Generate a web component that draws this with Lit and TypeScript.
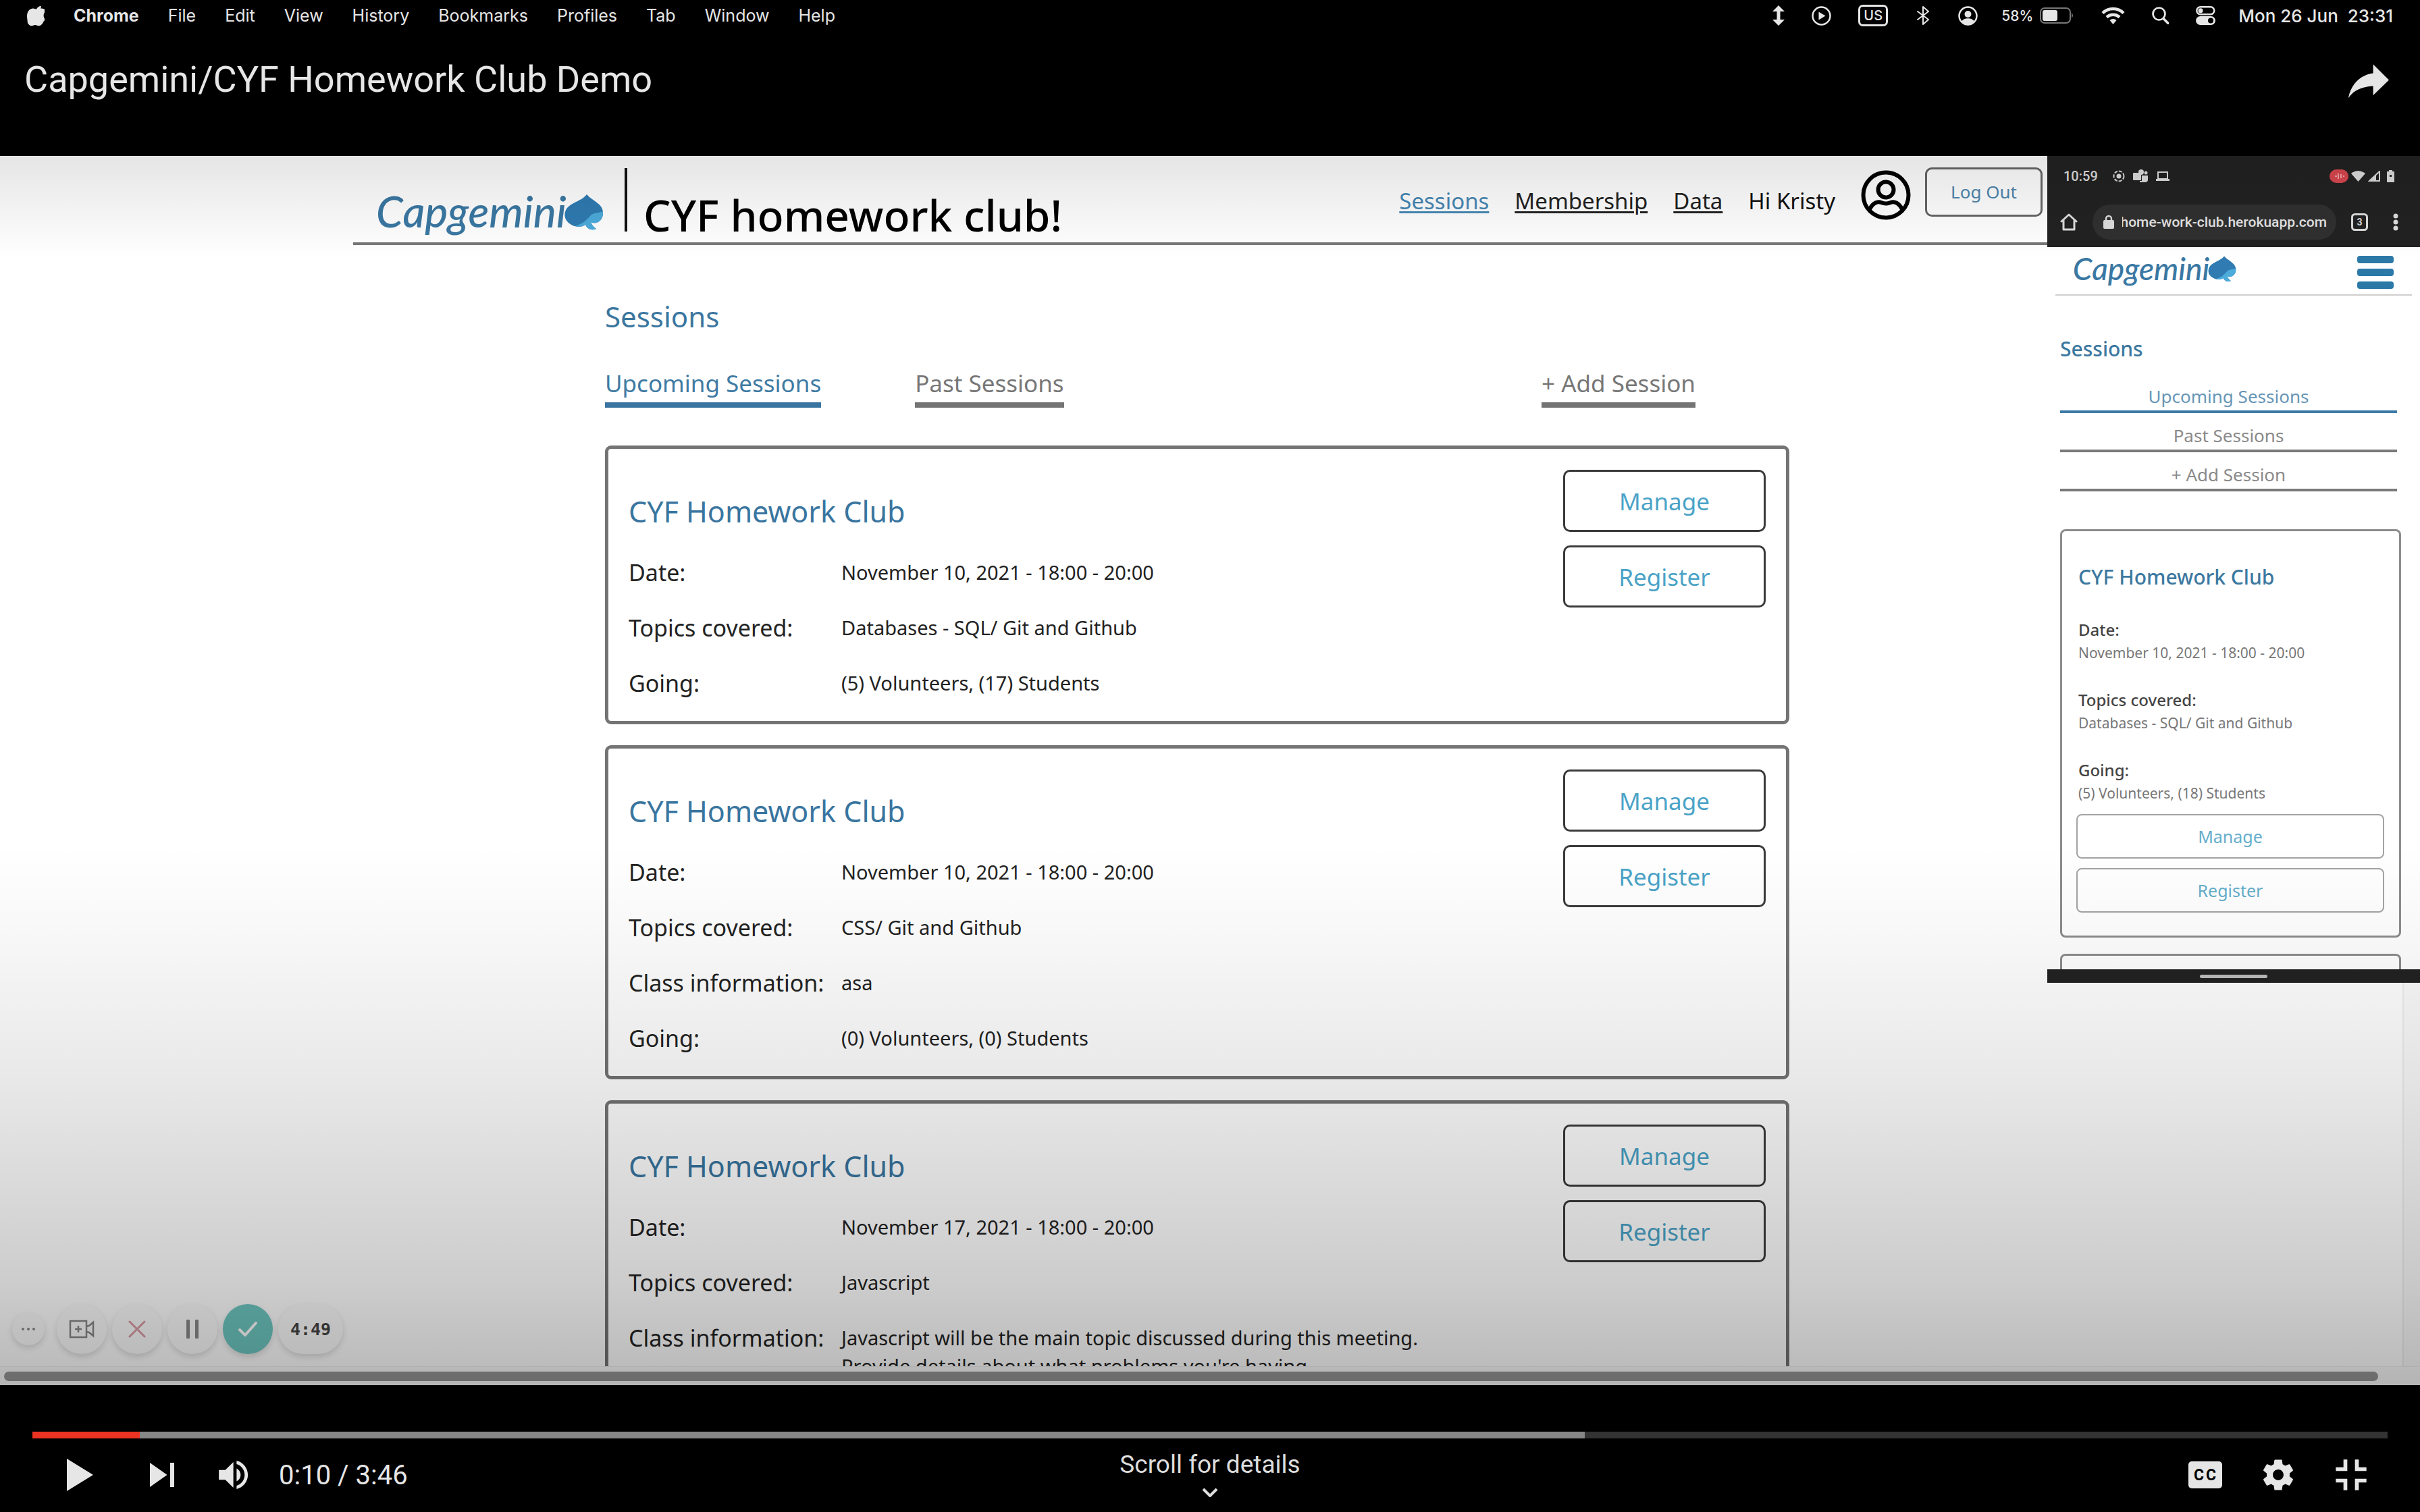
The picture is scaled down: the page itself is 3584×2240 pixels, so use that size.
import { LitElement, html, css, svg, nothing } from "lit";
import { customElement, property } from "lit/decorators.js";

interface Session {
  date: string;
  topics: string;
  info?: string;
  going?: string;
}

const sessions: Session[] = [
  { date: "November 10, 2021 - 18:00 - 20:00", topics: "Databases - SQL/ Git and Github", going: "(5) Volunteers, (17) Students" },
  { date: "November 10, 2021 - 18:00 - 20:00", topics: "CSS/ Git and Github", info: "asa", going: "(0) Volunteers, (0) Students" },
  {
    date: "November 17, 2021 - 18:00 - 20:00",
    topics: "Javascript",
    info: "Javascript will be the main topic discussed during this meeting. Provide details about what problems you're having",
  },
];

const icon = (w: number, h: number, box: string, body: unknown) =>
  html`<svg width=${w} height=${h} viewBox=${box} fill="currentColor" aria-hidden="true">${body}</svg>`;

const stroke = (d: string, width: number) =>
  svg`<path d=${d} fill="none" stroke="currentColor" stroke-width=${width} stroke-linecap="round" stroke-linejoin="round"/>`;

/** Wordmark followed by the two-tone spade. */
@customElement("brand-logo")
export class BrandLogo extends LitElement {
  @property({ type: Number }) width = 334;

  static styles = css`
    :host { display: block; line-height: 0; }
    .logo { overflow: visible; }
    .word { font: italic 500 64px "Lato", "Liberation Sans", sans-serif; fill: #3a78a3; }
  `;

  render() {
    return html`<svg class="logo" width=${this.width} viewBox="0 0 334 78" role="img" aria-label="Capgemini">
      <text class="word" x="-3" y="54">Capgemini</text>
      <path fill="#2f7bb2" d="M309 5C313 10 319 13 325 18C332 23 335 31 332 39C329 46 322 49 315 46C317 51 320 54 323 56C315 59 310 56 307 50C298 56 286 52 280 45C274 38 276 28 282 23C290 16 302 14 309 5Z"/>
      <path fill="#4cabdb" d="M333 30C334 43 324 51 315 46C317 51 320 54 323 56C315 59 310 56 307 50C302 53 297 54 292 52C304 48 309 43 314 37C319 31 327 33 333 30Z"/>
    </svg>`;
  }
}

@customElement("session-card")
export class SessionCard extends LitElement {
  @property({ attribute: false }) session!: Session;

  static styles = css`
    :host { display: block; font-family: "Noto Sans", "Open Sans", sans-serif; color: #222; }
    .card {
      display: flex; justify-content: space-between; align-items: flex-start;
      border: 5px solid #747474; border-radius: 9px; padding: 31px 30px 15px;
    }
    .title { margin: 32px 0 19px; font-size: 43px; line-height: 60px; font-weight: 400; color: #39759f; }
    .details { margin: 0; }
    .row { display: grid; grid-template-columns: 315px minmax(0, 880px); padding: 20px 0; }
    .label { font-size: 34px; line-height: 42px; }
    .value { margin: 0; font-size: 29px; line-height: 42px; }
    .actions { display: grid; gap: 20px; width: 300px; flex: none; }
    .action {
      box-sizing: border-box; height: 92px; border: 3px solid #3a3a3a; border-radius: 10px;
      background: none; font: 400 35px "Noto Sans", sans-serif; color: #4ba3c7;
    }
  `;

  private row(label: string, value?: string) {
    return value ? html`<div class="row"><dt class="label">${label}</dt><dd class="value">${value}</dd></div>` : nothing;
  }

  render() {
    const s = this.session;
    return html`<article class="card">
      <div>
        <h3 class="title">CYF Homework Club</h3>
        <dl class="details">
          ${this.row("Date:", s.date)} ${this.row("Topics covered:", s.topics)}
          ${this.row("Class information:", s.info)} ${this.row("Going:", s.going)}
        </dl>
      </div>
      <div class="actions">
        <button class="action">Manage</button>
        <button class="action">Register</button>
      </div>
    </article>`;
  }
}

@customElement("phone-view")
export class PhoneView extends LitElement {
  static styles = css`
    :host { display: block; font-family: "Noto Sans", "Open Sans", sans-serif; background: #fff; }
    .chrome { background: #222; color: #ddd; height: 135px; box-sizing: border-box; padding: 18px 31px 0 19px; }
    .status { display: flex; align-items: center; gap: 12px; height: 24px; padding-left: 5px; }
    .clock { font: 500 20px "Roboto", sans-serif; margin-right: 10px; }
    .radios { display: flex; align-items: center; gap: 4px; margin-left: auto; padding-right: 4px; }
    .bar { display: flex; align-items: center; height: 52px; margin-top: 30px; }
    .address {
      display: flex; align-items: center; gap: 12px; height: 52px; box-sizing: border-box; border-radius: 26px;
      background: #303030; margin: 0 22px 0 22px; padding: 0 14px 0 16px; flex: 1; min-width: 0;
    }
    .url { display: flex; justify-content: flex-end; overflow: hidden; flex: 1; min-width: 0; font: 500 21px/30px "Roboto", sans-serif; color: #e4e4e4; white-space: nowrap; }
    .tabs-icon { margin-right: 36px; }
    .tool { border: 0; background: none; color: inherit; padding: 0; display: flex; }
    .screen { height: 1070px; overflow: hidden; }
    .top { display: flex; justify-content: space-between; align-items: center; height: 72px; margin: 0 12px; padding: 6px 27px 0 28px; box-sizing: border-box; border-bottom: 2px solid #cfcfcf; color: #2c79a8; }
    .content { padding: 58px 28px 0 19px; }
    .heading { margin: 0; font-size: 30px; line-height: 42px; font-weight: 500; color: #3c78a0; }
    .tabs { display: grid; gap: 15px; padding: 31px 6px 0 0; }
    .tab { text-align: center; font-size: 26px; line-height: 36px; padding-bottom: 3px; text-decoration: none; color: #8a8a8a; border-bottom: 4px solid #7a7a7a; }
    .tab.on { color: #6796b6; border-color: #3d7ba7; }
    .card { border: 3px solid #8c8c8c; border-radius: 8px; padding: 47px 22px 34px 24px; margin-top: 56px; }
    .next { margin-top: 24px; padding-top: 0; min-height: 60px; }
    .title { margin: 0 0 40px; font-size: 30px; line-height: 42px; font-weight: 500; color: #3c78a0; }
    .details { margin: 0; }
    .label { font-size: 24px; line-height: 34px; font-weight: 500; color: #444; }
    .value { margin: 0 0 36px; font-size: 21px; line-height: 34px; color: #777; }
    .value:last-child { margin-bottom: 14px; }
    .actions { display: grid; gap: 14px; margin: 0 0 0 -3px; }
    .action { height: 66px; border: 2px solid #a3a3a3; border-radius: 8px; background: none; font: 400 25px "Noto Sans", sans-serif; color: #65aecb; }
    .home { background: #222; height: 20px; display: grid; place-items: center; }
    .handle { width: 100px; height: 5px; border-radius: 3px; background: #bdbdbd; }
  `;

  render() {
    return html`
      <div class="chrome">
        <div class="status">
          <span class="clock">10:59</span>
          ${icon(18, 18, "0 0 18 18", svg`<circle cx="9" cy="9" r="7.5" fill="none" stroke="currentColor" stroke-width="2" stroke-dasharray="5 2"/><circle cx="9" cy="9" r="3.5"/>`)}
          ${icon(22, 20, "0 0 22 20", svg`<rect x="0" y="5" width="12" height="11" rx="1"/><circle cx="12" cy="4" r="4"/><circle cx="19" cy="5" r="2.5"/><path d="M13 9h9v6a4 4 0 0 1-4 4h-8v-2h3z"/>`)}
          ${icon(20, 16, "0 0 20 16", svg`<path fill-rule="evenodd" d="M2 1h16v11h2v3H0v-3h2zM4 3v8h12V3z"/>`)}
          <span class="radios">
            ${icon(28, 20, "0 0 28 20", svg`<rect width="28" height="20" rx="10" fill="#d9474f"/><path d="M8 10h3M13 6v8M17 7v6M20 10h2" stroke="#f4a3a7" stroke-width="2"/>`)}
            ${icon(21, 16, "0 0 21 16", svg`<path d="M0 4Q10 -4 21 4L10.500 16z"/>`)}
            ${icon(18, 16, "0 0 18 16", svg`<path d="M17 1v14H2z" fill="none" stroke="currentColor" stroke-width="2"/><path d="M12 6v9H2z"/>`)}
            ${icon(20, 18, "-6 0 20 18", svg`<path fill-rule="evenodd" d="M3 0h5v2h3v16H0V2h3zM4 7v3h3V7z"/>`)}
          </span>
        </div>
        <div class="bar">
          <button class="tool" aria-label="Home">${icon(26, 28, "0 0 26 28", stroke("M2 13L13 3L24 13M5 11V25H21V11", 3))}</button>
          <div class="address">
            ${icon(16, 22, "0 0 16 22", svg`<rect y="8" width="16" height="13" rx="2"/><path d="M4 9V6a4 4 0 0 1 8 0v3" fill="none" stroke="currentColor" stroke-width="2.500"/>`)}
            <span class="url">home-work-club.herokuapp.com</span>
          </div>
          <button class="tool tabs-icon" aria-label="Tabs">
            ${icon(25, 26, "0 0 25 26", svg`<rect x="1.500" y="1.500" width="22" height="23" rx="4" fill="none" stroke="currentColor" stroke-width="3"/><text x="12.500" y="18" text-anchor="middle" font-size="14" font-weight="700" font-family="Roboto">3</text>`)}
          </button>
          <button class="tool" aria-label="Menu">${icon(10, 26, "0 0 10 26", svg`<circle cx="5" cy="4" r="3.500"/><circle cx="5" cy="13" r="3.500"/><circle cx="5" cy="22" r="3.500"/>`)}</button>
        </div>
      </div>
      <div class="screen">
        <div class="top">
          <brand-logo width="240"></brand-logo>
          <button class="tool" aria-label="Navigation">${icon(54, 50, "0 0 54 50", svg`<rect width="54" height="11" rx="4"/><rect y="19" width="54" height="11" rx="4"/><rect y="38" width="54" height="11" rx="4"/>`)}</button>
        </div>
        <div class="content">
          <h2 class="heading">Sessions</h2>
          <nav class="tabs">
            <a class="tab on" href="#upcoming">Upcoming Sessions</a>
            <a class="tab" href="#past">Past Sessions</a>
            <a class="tab" href="#add">+ Add Session</a>
          </nav>
          <article class="card">
            <h3 class="title">CYF Homework Club</h3>
            <dl class="details">
              <dt class="label">Date:</dt><dd class="value">November 10, 2021 - 18:00 - 20:00</dd>
              <dt class="label">Topics covered:</dt><dd class="value">Databases - SQL/ Git and Github</dd>
              <dt class="label">Going:</dt><dd class="value">(5) Volunteers, (18) Students</dd>
            </dl>
            <div class="actions">
              <button class="action">Manage</button>
              <button class="action">Register</button>
            </div>
          </article>
          <article class="card next"></article>
        </div>
      </div>
      <div class="home"><span class="handle"></span></div>
    `;
  }
}

@customElement("app-root")
export class AppRoot extends LitElement {
  static styles = css`
    :host { display: block; }
    .player { display: flex; flex-direction: column; height: 100vh; background: #000; color: #e6e6e6; overflow: hidden; }
    button { border: 0; background: none; padding: 0; color: inherit; }

    .menubar { display: flex; align-items: center; height: 46px; padding: 0 40px; flex: none; font: 400 25px "Inter", sans-serif; white-space: nowrap; }
    .menus { display: flex; align-items: center; gap: 43px; }
    .menus b { font-weight: 700; }
    .tray { display: flex; align-items: center; gap: 40px; margin-left: auto; }
    .lang { box-sizing: border-box; width: 44px; height: 32px; border: 3px solid; border-radius: 7px; font: 500 20px/26px "Inter", sans-serif; text-align: center; }
    .power { display: flex; align-items: center; gap: 10px; font-size: 21px; font-weight: 500; margin-left: -5px; }
    .when { font-size: 26px; font-weight: 500; white-space: pre; margin-left: -6px; }
    .titlebar { display: flex; justify-content: space-between; align-items: flex-start; height: 165px; padding: 20px 22px 0 36px; flex: none; font-family: "Roboto", sans-serif; }
    .title { margin: 20px 0 0; font-size: 54px; line-height: 64px; font-weight: 400; }
    .share { display: flex; }

    .video { position: relative; flex: 1; min-height: 0; display: grid; grid-template-rows: minmax(0, 1fr) 27px; background: #fff; }
    .video::after {
      content: ""; position: absolute; inset: 0; pointer-events: none;
      background:
        linear-gradient(rgba(0, 0, 0, 0.1), rgba(0, 0, 0, 0) 150px),
        linear-gradient(to top, rgba(0, 0, 0, 0.28), rgba(0, 0, 0, 0.2) 150px, rgba(0, 0, 0, 0.09) 450px, rgba(0, 0, 0, 0.03) 660px, rgba(0, 0, 0, 0) 800px);
    }
    .stage { display: grid; grid-template-columns: minmax(0, 1fr) 552px; min-height: 0; overflow: hidden; border-bottom: 1px solid #eee; }
    .page { color: #111; font-family: "Noto Sans", "Open Sans", sans-serif; overflow: hidden; }
    .head { display: flex; justify-content: space-between; align-items: flex-start; height: 132px; box-sizing: border-box; margin-left: 523px; padding: 17px 7px 0 37px; border-bottom: 4px solid #777; }
    .brand { display: flex; align-items: flex-start; }
    .brand brand-logo { padding-top: 35px; }
    .rule { width: 4px; height: 94px; background: #111; margin: 1px 24px 0 31px; }
    .site { margin: 0; padding-top: 39px; font-size: 64px; line-height: 64px; font-weight: 500; color: #000; }
    .links { display: flex; align-items: center; gap: 38px; font-size: 33px; line-height: 44px; }
    .link { color: #222; padding-top: 22px; text-underline-offset: 3px; text-decoration-thickness: 3px; }
    .link.on { color: #4687b4; }
    .hello { padding-top: 22px; }
    .avatar { display: flex; color: #000; margin: 4px -17px 0 0; }
    .logout { box-sizing: border-box; align-self: flex-start; width: 174px; height: 73px; border: 3px solid #666; border-radius: 10px; font: 400 26px "Noto Sans", sans-serif; color: #4f86ae; padding-bottom: 2px; }
    .main { max-width: 1754px; padding: 76px 0 0 896px; }
    .heading { margin: 0 0 44px; font-size: 42px; line-height: 60px; font-weight: 400; color: #3a769f; }
    .tabs { display: flex; gap: 139px; padding-right: 139px; margin-bottom: 56px; }
    .tab { font-size: 35px; line-height: 50px; padding-bottom: 3px; border-bottom: 8px solid #747474; color: #777; text-decoration: none; }
    .tab.on { color: #3f7ba4; border-color: #3a74a0; }
    .tab.add { margin-left: auto; }
    .cards { display: grid; gap: 31px; }

    .side { display: flex; flex-direction: column; min-height: 0; }
    .side phone-view { flex: none; }
    .gutter { flex: 1; width: 24px; margin-left: auto; border-left: 2px solid #ededed; background: #fafafa; }
    .scroll { padding: 7px 62px 6px 6px; background: #fafafa; }
    .thumb { height: 14px; border-radius: 7px; background: #969696; }

    .recorder { position: absolute; left: 18px; bottom: 46px; display: flex; align-items: center; gap: 8px; color: #888; }
    .chip { display: flex; align-items: center; justify-content: center; width: 74px; height: 74px; border-radius: 50%; background: #fbfbfb; box-shadow: 0 4px 10px rgba(0, 0, 0, 0.14); }
    .chip.more { width: 48px; height: 48px; margin-right: 10px; }
    .chip.done { background: #6dc6c0; color: #fff; }
    .chip.stop { color: #d99aa4; }
    .chip.time { width: 96px; border-radius: 37px; font: 700 25px "DejaVu Sans Mono", monospace; color: #444; }

    .controls { height: 188px; flex: none; font-family: "Roboto", sans-serif; }
    .seek { display: block; appearance: none; box-sizing: border-box; width: calc(100% - 96px); height: 10px; margin: 69px 48px 0; background: linear-gradient(to right, #ea3323 4.56%, #868686 4.56% 65.9%, #333 65.9%); }
    .seek::-webkit-slider-thumb { appearance: none; width: 1px; height: 10px; }
    .buttons { display: grid; grid-template-columns: 1fr auto 1fr; height: 108px; padding: 0 48px; }
    .left { display: flex; align-items: center; padding-left: 15px; }
    .left button, .right button { display: flex; align-items: center; justify-content: center; }
    .next { margin-left: 15px; }
    .volume { margin: 0 22px 0 11px; }
    .clock { font-size: 40px; }
    .details { display: flex; flex-direction: column; align-items: center; gap: 12px; padding-top: 17px; font: 400 37px/44px "Roboto", sans-serif; color: #ddd; align-self: start; }
    .right { display: flex; justify-content: flex-end; }
    .right button { width: 108px; height: 108px; }
    .cc { font: 700 23px "Roboto", sans-serif; fill: #000; }
  `;

  private menubar() {
    return html`<header class="menubar">
      <div class="menus">
        ${icon(26, 34, "-2 -12 170 222", svg`<path d="M150 130c-3 8-7 15-12 22-6 9-12 15-16 18-6 6-13 9-20 9-5 0-11-1-18-4s-13-4-19-4-12 1-19 4-12 5-17 5c-7 0-14-3-21-9-4-4-10-10-16-20C-8 134-14 106-14 86c0-22 5-38 13-50 13-18 31-25 46-25 5 0 12 2 21 5s15 5 17 5c2 0 9-2 20-6 10-4 19-5 26-5 20 2 35 9 44 24-17 11-26 26-26 45 0 15 5 28 16 38 5 5 10 8 16 11zM122-8c0 12-4 24-13 34-11 12-24 19-38 18-1-14 5-28 13-37C94-4 109-13 121-14z" transform="translate(12 20)"/>`)}
        <b>Chrome</b>
        ${["File", "Edit", "View", "History", "Bookmarks", "Profiles", "Tab", "Window", "Help"].map((m) => html`<span>${m}</span>`)}
      </div>
      <div class="tray">
        ${icon(18, 30, "0 0 18 30", svg`<path d="M9 0L18 9H11.500V21H18L9 30L0 21H6.500V9H0z"/>`)}
        ${icon(29, 29, "0 0 29 29", svg`<circle cx="14.500" cy="14.500" r="13" fill="none" stroke="currentColor" stroke-width="2.500"/><path d="M10.500 8.500V20.500L20.500 14.500z"/>`)}
        <span class="lang">US</span>
        ${icon(24, 30, "-2 0 24 30", stroke("M2 9L18 21L10 28V2L18 9L2 21", 2))}
        ${icon(29, 29, "0 0 29 29", svg`<circle cx="14.500" cy="14.500" r="13" fill="none" stroke="currentColor" stroke-width="2.500"/><circle cx="14.500" cy="12" r="5"/><path d="M5 23a10 7 0 0 1 19 0a13 13 0 0 1-19 0z"/>`)}
        <span class="power">58%
          ${icon(51, 24, "0 0 51 24", svg`<rect x="1" y="1" width="44" height="22" rx="6" fill="none" stroke="#777" stroke-width="2"/><rect x="4" y="4" width="22" height="16" rx="3"/><path d="M47 8q4 4 0 8z" fill="#777"/>`)}
        </span>
        ${icon(35, 26, "0 0 35 26", svg`<path d="M2 9.500a22 22 0 0 1 31 0" fill="none" stroke="currentColor" stroke-width="4.500"/><path d="M8 15.500a14 14 0 0 1 19 0" fill="none" stroke="currentColor" stroke-width="4.500"/><path d="M12.500 20a7 7 0 0 1 10 0L17.500 26z"/>`)}
        ${icon(25, 26, "0 0 25 26", svg`<circle cx="10.500" cy="10.500" r="9" fill="none" stroke="currentColor" stroke-width="2.700"/><path d="M17 17.500L24 24.500" stroke="currentColor" stroke-width="3.500" stroke-linecap="round"/>`)}
        ${icon(29, 28, "0 0 29 28", svg`<rect x="1.300" y="1.300" width="26" height="11" rx="5.500" fill="none" stroke="currentColor" stroke-width="2.500"/><circle cx="7" cy="6.800" r="3.500"/><rect y="15" width="29" height="13" rx="6.500"/><circle cx="22" cy="21.500" r="4" fill="#000"/>`)}
        <span class="when">Mon 26 Jun  23:31</span>
      </div>
    </header>`;
  }

  private page() {
    return html`<section class="page">
      <header class="head">
        <div class="brand">
          <brand-logo></brand-logo>
          <span class="rule"></span>
          <h1 class="site">CYF homework club!</h1>
        </div>
        <nav class="links">
          <a class="link on" href="#sessions">Sessions</a>
          <a class="link" href="#membership">Membership</a>
          <a class="link" href="#data">Data</a>
          <span class="hello">Hi Kristy</span>
          <span class="avatar">${icon(74, 74, "0 0 74 74", svg`<circle cx="37" cy="37" r="33.500" fill="none" stroke="currentColor" stroke-width="6"/><circle cx="37" cy="29" r="11.500" fill="none" stroke="currentColor" stroke-width="6"/><path d="M13 58C18 48 25 46 30 48Q37 51 44 48C49 46 56 48 61 58" fill="none" stroke="currentColor" stroke-width="6"/>`)}</span>
          <button class="logout">Log Out</button>
        </nav>
      </header>
      <main class="main">
        <h2 class="heading">Sessions</h2>
        <nav class="tabs">
          <a class="tab on" href="#upcoming">Upcoming Sessions</a>
          <a class="tab" href="#past">Past Sessions</a>
          <a class="tab add" href="#add">+ Add Session</a>
        </nav>
        <div class="cards">${sessions.map((s) => html`<session-card .session=${s}></session-card>`)}</div>
      </main>
    </section>`;
  }

  private recorder() {
    return html`<div class="recorder">
      <button class="chip more" aria-label="More">${icon(20, 4, "0 0 20 4", svg`<circle cx="2" cy="2" r="2"/><circle cx="10" cy="2" r="2"/><circle cx="18" cy="2" r="2"/>`)}</button>
      <button class="chip" aria-label="Camera">${icon(38, 28, "0 0 38 28", svg`<path d="M2 2h24v24H2zM26 10l4-1 6-5v20l-6-5-4-1M14 9v10M9 14h10" fill="none" stroke="currentColor" stroke-width="2.500"/>`)}</button>
      <button class="chip stop" aria-label="Discard">${icon(26, 26, "0 0 26 26", stroke("M2 2L24 24M24 2L2 24", 3))}</button>
      <button class="chip" aria-label="Pause">${icon(18, 28, "0 0 18 28", svg`<rect width="5" height="28" rx="1"/><rect x="13" width="5" height="28" rx="1"/>`)}</button>
      <button class="chip done" aria-label="Finish">${icon(30, 24, "0 0 30 24", stroke("M3 13L11 21L27 3", 4))}</button>
      <span class="chip time">4:49</span>
    </div>`;
  }

  private controls() {
    return html`<footer class="controls">
      <input class="seek" type="range" aria-label="Seek" min="0" max="226" value="10" />
      <div class="buttons">
        <div class="left">
          <button aria-label="Play">${icon(108, 108, "0 0 36 36", svg`<path d="M12 26L25 18L12 10z"/>`)}</button>
          <button class="next" aria-label="Next">${icon(108, 108, "0 0 36 36", svg`<path d="M12 24L20.500 18L12 12zM22 12v12h2V12z"/>`)}</button>
          <button class="volume" aria-label="Mute">${icon(86, 86, "0 0 36 36", svg`<path d="M8 21h4l5 5V10l-5 5H8zM19 14v8c1.480-.680 2.500-2.230 2.500-4s-1.020-3.260-2.500-4zM19 11.290c2.890.860 5 3.540 5 6.710s-2.110 5.850-5 6.710v2.060c4.010-.910 7-4.490 7-8.770s-2.990-7.860-7-8.770z"/>`)}</button>
          <span class="clock">0:10 / 3:46</span>
        </div>
        <button class="details">Scroll for details
          ${icon(24, 14, "0 0 24 14", svg`<path d="M2 2L12 12L22 2" fill="none" stroke="currentColor" stroke-width="4"/>`)}
        </button>
        <div class="right">
          <button aria-label="Subtitles">${icon(50, 40, "0 0 50 40", svg`<rect width="50" height="40" rx="5"/><text class="cc" x="8 26" y="28">CC</text>`)}</button>
          <button aria-label="Settings">${icon(102, 102, "0 0 36 36", svg`<path d="m23.940 18.780c.030-.250.050-.510.050-.780 0-.270-.020-.520-.050-.780l1.680-1.320c.150-.120.190-.330.090-.510l-1.600-2.760c-.090-.170-.310-.240-.480-.170l-1.990.800c-.410-.320-.860-.580-1.350-.780l-.300-2.120c-.020-.190-.190-.330-.390-.330l-3.200 0c-.200 0-.360.140-.390.330l-.300 2.120c-.480.200-.930.470-1.350.780l-1.990-.800c-.180-.070-.390 0-.480.170l-1.600 2.760c-.100.170-.050.390.090.510l1.680 1.320c-.030.250-.050.520-.050.780 0 .260.020.520.050.780l-1.680 1.320c-.150.120-.190.330-.090.510l1.600 2.760c.090.170.310.240.480.170l1.990-.800c.410.320.860.580 1.350.780l.300 2.120c.020.190.190.330.390.330l3.200 0c.200 0 .360-.140.390-.330l.300-2.120c.480-.200.930-.470 1.350-.780l1.990.800c.180.070.390 0 .480-.170l1.600-2.760c.090-.170.050-.390-.090-.510l-1.680-1.320zm-5.940 2.010c-1.540 0-2.800-1.250-2.800-2.800 0-1.540 1.250-2.800 2.800-2.800 1.540 0 2.800 1.250 2.800 2.800 0 1.540-1.250 2.800-2.800 2.800z"/>`)}</button>
          <button aria-label="Exit full screen">${icon(102, 102, "0 0 36 36", svg`<path d="M14 14h-4v2h6v-6h-2zM22 14v-4h-2v6h6v-2zM20 26h2v-4h4v-2h-6zM10 22h4v4h2v-6h-6z"/>`)}</button>
        </div>
      </div>
    </footer>`;
  }

  render() {
    return html`<div class="player">
      ${this.menubar()}
      <div class="titlebar">
        <h1 class="title">Capgemini/CYF Homework Club Demo</h1>
        <button class="share" aria-label="Share">${icon(108, 108, "0 0 36 36", svg`<path d="m20.200 14.190 0-4.450 7.790 7.790-7.790 7.560 0-4.560C16.270 20.690 12.100 21.810 9.340 24.760 8.800 25.130 7.600 27.290 8.120 25.650 9.080 21.320 11.800 17.180 15.980 15.380c1.330-.600 2.760-.980 4.210-1.190z"/>`)}</button>
      </div>
      <div class="video">
        <div class="stage">
          ${this.page()}
          <aside class="side"><phone-view></phone-view><div class="gutter"></div></aside>
        </div>
        <div class="scroll"><div class="thumb"></div></div>
        ${this.recorder()}
      </div>
      ${this.controls()}
    </div>`;
  }
}
